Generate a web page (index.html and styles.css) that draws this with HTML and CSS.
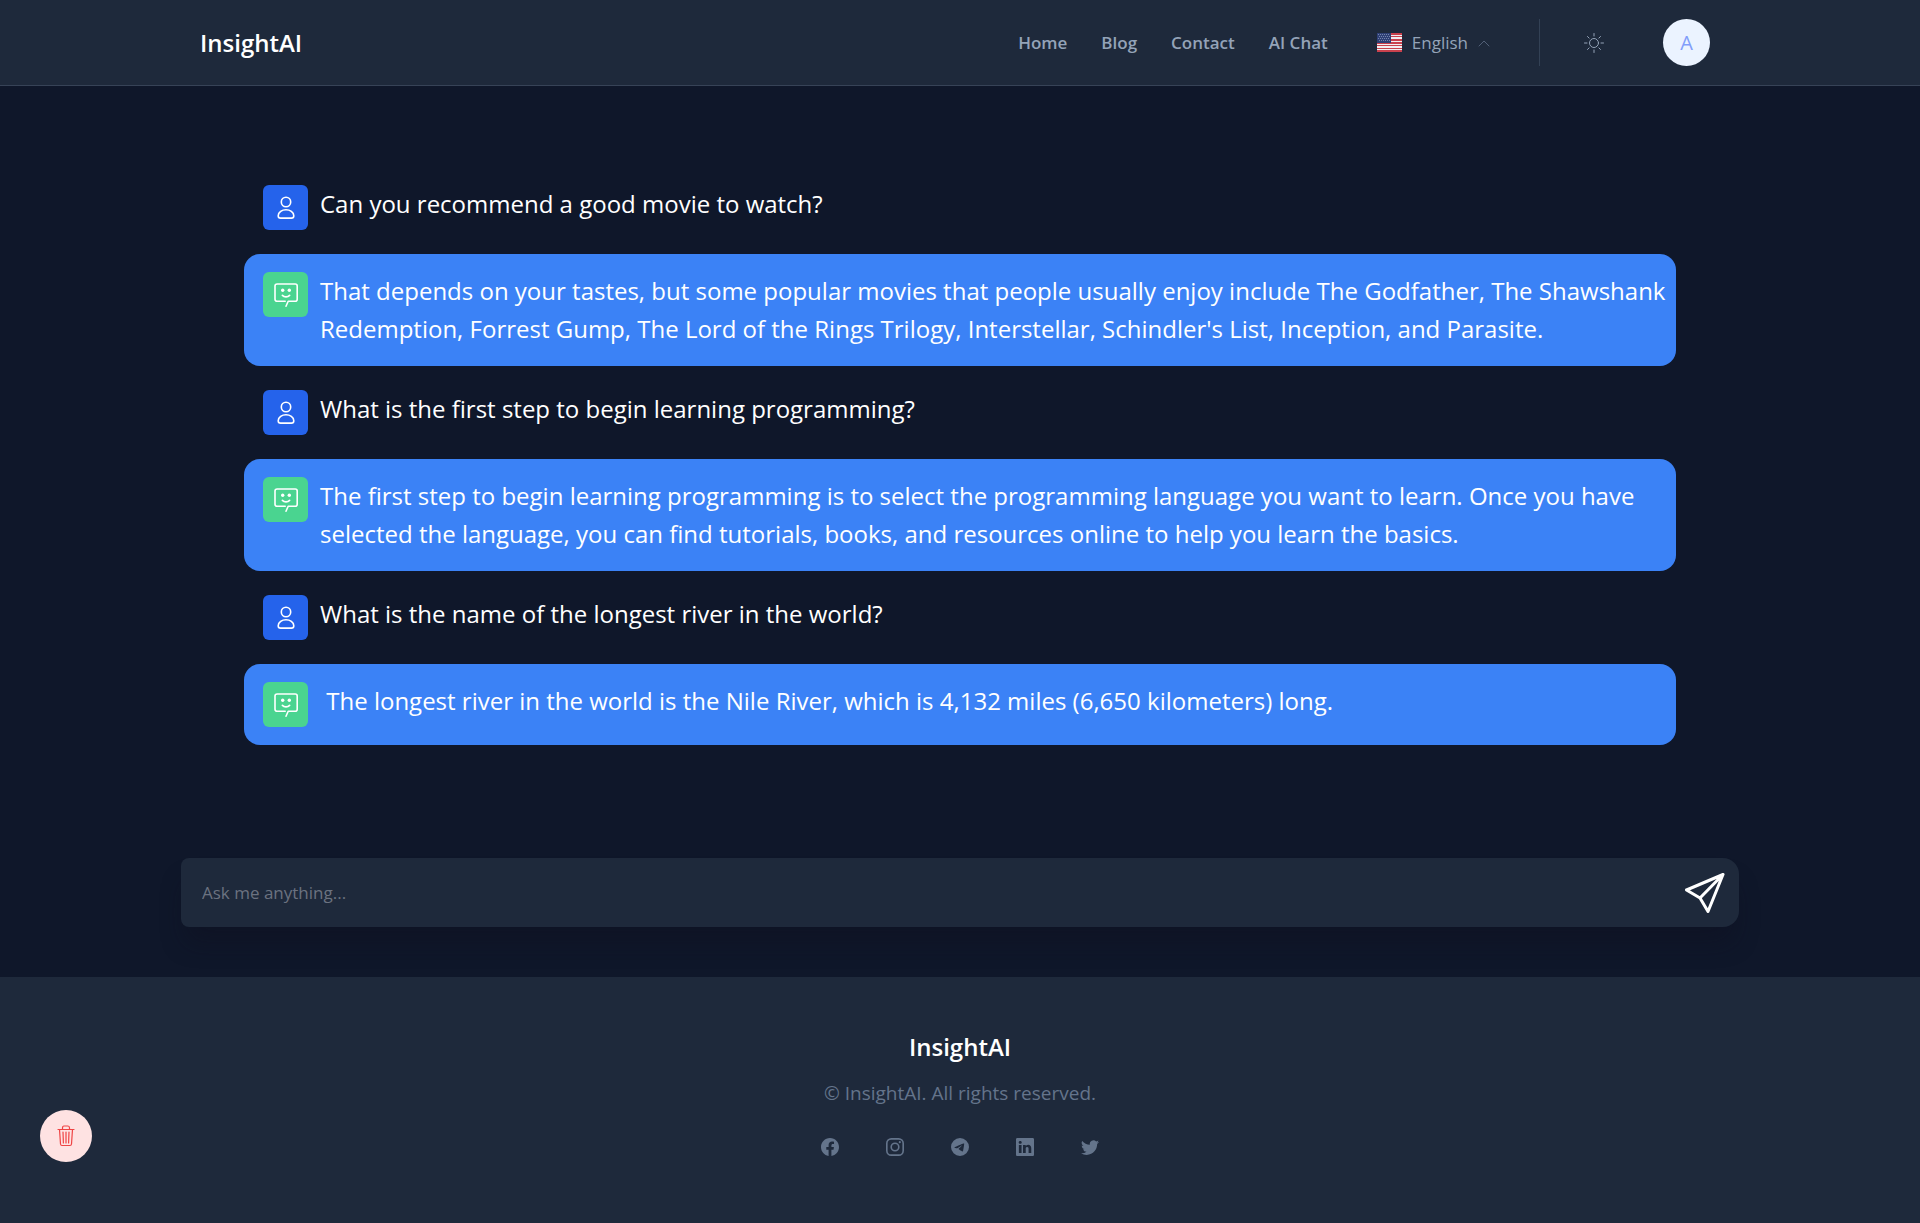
FILE: index.html
```html
<!DOCTYPE html>
<html lang="en">
<head>
<meta charset="utf-8">
<title>InsightAI</title>
<link rel="stylesheet" href="styles.css">
</head>
<body>
<header class="header">
  <div class="header-inner">
    <a class="brand" href="#">InsightAI</a>
    <nav class="nav">
      <a href="#">Home</a>
      <a href="#">Blog</a>
      <a href="#">Contact</a>
      <a href="#">AI Chat</a>
    </nav>
    <button class="language" type="button">
      <svg class="flag" viewBox="0 0 25 19" aria-hidden="true">
        <rect width="25" height="19" fill="#c9414d"/>
        <path fill="#f1eef2" d="M0 2h25v1H0zM0 4h25v2H0zM0 8h25v1H0zM0 11h25v1H0zM0 13h25v2H0zM0 16h25v1H0z"/>
        <rect width="14" height="10" fill="#2f4075"/>
        <path stroke="#7484ac" stroke-linecap="butt" stroke-dasharray="1 1" d="M1 1.500h12M2 3.500h12M1 5.500h12M2 7.500h12"/>
      </svg>
      <span>English</span>
      <svg class="chevron" viewBox="0 0 12 8" aria-hidden="true"><path d="M1 7l5-5 5 5"/></svg>
    </button>
    <span class="divider"></span>
    <button class="theme" type="button" aria-label="Toggle theme">
      <svg viewBox="0 0 20 20" aria-hidden="true"><circle cx="10" cy="10" r="4.500"/><path d="M10 .5v2.500M10 17v2.500M.5 10H3M17 10h2.500M3.500 3.500l1.600 1.600M14.900 14.900l1.600 1.600M3.500 16.500l1.600-1.600M14.900 5.100l1.600-1.600"/></svg>
    </button>
    <button class="avatar" type="button">A</button>
  </div>
</header>

<main class="main">
  <section class="chat">
    <article class="message">
      <span class="badge badge-user"><svg viewBox="0 0 24 24"><circle cx="12" cy="6" r="4.700"/><path d="M12 13.800c3.900 0 7.800 2.400 7.800 5.900 0 1.700-1.100 2.400-2.400 2.400H6.600c-1.300 0-2.400-.7-2.400-2.400 0-3.500 3.900-5.900 7.800-5.900z"/></svg></span>
      <p>Can you recommend a good movie to watch?</p>
    </article>
    <article class="message reply">
      <span class="badge badge-bot"><svg viewBox="0 0 24 24"><path d="M12 23.200l2.200-5h7c1.200 0 2-.8 2-2V3c0-1.200-.8-2-2-2h-18C2 1 1 1.800 1 3v13.200c0 1.200 1 2 2.200 2h8M8.400 12.400c1.800 2 5.400 2 7.200 0"/><circle class="eye" cx="8.700" cy="7.300" r="1.700"/><circle class="eye" cx="15.300" cy="7.300" r="1.700"/></svg></span>
      <p>That depends on your tastes, but some popular movies that people usually enjoy include The Godfather, The Shawshank Redemption, Forrest Gump, The Lord of the Rings Trilogy, Interstellar, Schindler's List, Inception, and Parasite.</p>
    </article>
    <article class="message">
      <span class="badge badge-user"><svg viewBox="0 0 24 24"><circle cx="12" cy="6" r="4.700"/><path d="M12 13.800c3.900 0 7.800 2.400 7.800 5.900 0 1.700-1.100 2.400-2.400 2.400H6.600c-1.300 0-2.400-.7-2.400-2.400 0-3.500 3.900-5.900 7.800-5.900z"/></svg></span>
      <p>What is the first step to begin learning programming?</p>
    </article>
    <article class="message reply">
      <span class="badge badge-bot"><svg viewBox="0 0 24 24"><path d="M12 23.200l2.200-5h7c1.200 0 2-.8 2-2V3c0-1.200-.8-2-2-2h-18C2 1 1 1.800 1 3v13.200c0 1.200 1 2 2.200 2h8M8.400 12.400c1.800 2 5.400 2 7.200 0"/><circle class="eye" cx="8.700" cy="7.300" r="1.700"/><circle class="eye" cx="15.300" cy="7.300" r="1.700"/></svg></span>
      <p>The first step to begin learning programming is to select the programming language you want to learn. Once you have selected the language, you can find tutorials, books, and resources online to help you learn the basics.</p>
    </article>
    <article class="message">
      <span class="badge badge-user"><svg viewBox="0 0 24 24"><circle cx="12" cy="6" r="4.700"/><path d="M12 13.800c3.900 0 7.800 2.400 7.800 5.900 0 1.700-1.100 2.400-2.400 2.400H6.600c-1.300 0-2.400-.7-2.400-2.400 0-3.500 3.900-5.900 7.800-5.900z"/></svg></span>
      <p>What is the name of the longest river in the world?</p>
    </article>
    <article class="message reply">
      <span class="badge badge-bot"><svg viewBox="0 0 24 24"><path d="M12 23.200l2.200-5h7c1.200 0 2-.8 2-2V3c0-1.200-.8-2-2-2h-18C2 1 1 1.800 1 3v13.200c0 1.200 1 2 2.200 2h8M8.400 12.400c1.800 2 5.400 2 7.200 0"/><circle class="eye" cx="8.700" cy="7.300" r="1.700"/><circle class="eye" cx="15.300" cy="7.300" r="1.700"/></svg></span>
      <p>&nbsp;The longest river in the world is the Nile River, which is 4,132 miles (6,650 kilometers) long.</p>
    </article>
  </section>
  <form class="ask">
    <input type="text" aria-label="Ask me anything" placeholder="Ask me anything...">
    <button type="submit" aria-label="Send">
      <svg viewBox="0 0 40 40" aria-hidden="true"><path d="M38 1.500L1.500 17l13.500 8L23 38.500z M38 1.500L15 25"/></svg>
    </button>
  </form>
</main>

<footer class="footer">
  <a class="brand" href="#">InsightAI</a>
  <p class="copyright">© InsightAI. All rights reserved.</p>
  <div class="social">
    <a href="#" aria-label="Facebook"><svg viewBox="0 0 16 16"><path d="M16 8.049c0-4.446-3.582-8.050-8-8.050C3.580 0-.002 3.603-.002 8.050c0 4.017 2.926 7.347 6.750 7.951v-5.625h-2.030V8.050H6.750V6.275c0-2.017 1.195-3.131 3.022-3.131.876 0 1.791.157 1.791.157v1.980h-1.009c-.993 0-1.303.621-1.303 1.258v1.510h2.218l-.354 2.326H9.250V16c3.824-.604 6.750-3.934 6.750-7.951z"/></svg></a>
    <a href="#" aria-label="Instagram"><svg viewBox="0 0 16 16"><path fill-rule="evenodd" d="M4.700 0h6.600A4.700 4.700 0 0 1 16 4.700v6.600a4.700 4.700 0 0 1-4.700 4.700H4.700A4.700 4.700 0 0 1 0 11.300V4.700A4.700 4.700 0 0 1 4.700 0zm0 1.450A3.250 3.250 0 0 0 1.450 4.700v6.600a3.250 3.250 0 0 0 3.250 3.250h6.600a3.250 3.250 0 0 0 3.250-3.250V4.700a3.250 3.250 0 0 0-3.250-3.250zM8 3.900a4.100 4.100 0 1 1 0 8.200 4.100 4.100 0 0 1 0-8.200zm0 1.440a2.660 2.660 0 1 0 0 5.320 2.660 2.660 0 0 0 0-5.320z"/><circle cx="12.270" cy="3.730" r=".96"/></svg></a>
    <a href="#" aria-label="Telegram"><svg viewBox="0 0 16 16"><path d="M16 8A8 8 0 1 1 0 8a8 8 0 0 1 16 0zM8.287 5.906c-.778.324-2.334.994-4.666 2.010-.378.150-.577.298-.595.442-.030.243.275.339.690.470l.175.055c.408.133.958.288 1.243.294.260.006.549-.100.868-.320 2.179-1.471 3.304-2.214 3.374-2.230.050-.012.120-.026.166.016.047.041.042.120.037.141-.030.129-1.227 1.241-1.846 1.817-.193.180-.330.307-.358.336a8.154 8.154 0 0 1-.188.186c-.380.366-.664.640.015 1.088.327.216.589.393.850.571.284.194.568.387.936.629.093.060.183.125.270.187.331.236.630.448.997.414.214-.020.435-.220.547-.820.265-1.417.786-4.486.906-5.751a1.426 1.426 0 0 0-.013-.315.337.337 0 0 0-.114-.217.526.526 0 0 0-.310-.093c-.300.005-.763.166-2.984 1.090z"/></svg></a>
    <a href="#" aria-label="LinkedIn"><svg viewBox="0 0 16 16"><path d="M0 1.146C0 .513.526 0 1.175 0h13.650C15.474 0 16 .513 16 1.146v13.708c0 .633-.526 1.146-1.175 1.146H1.175C.526 16 0 15.487 0 14.854V1.146zm4.943 12.248V6.169H2.542v7.225h2.401zm-1.200-8.212c.837 0 1.358-.554 1.358-1.248-.015-.709-.520-1.248-1.342-1.248-.822 0-1.359.540-1.359 1.248 0 .694.521 1.248 1.327 1.248h.016zm4.908 8.212V9.359c0-.216.016-.432.080-.586.173-.431.568-.878 1.232-.878.869 0 1.216.662 1.216 1.634v3.865h2.401V9.250c0-2.220-1.184-3.252-2.764-3.252-1.274 0-1.845.700-2.165 1.193v.025h-.016a5.540 5.540 0 0 1 .016-.025V6.169h-2.400c.030.678 0 7.225 0 7.225h2.400z"/></svg></a>
    <a href="#" aria-label="Twitter"><svg viewBox="0 0 16 16"><path d="M5.026 15c6.038 0 9.341-5.003 9.341-9.334 0-.140 0-.282-.006-.422A6.685 6.685 0 0 0 16 3.542a6.658 6.658 0 0 1-1.889.518 3.301 3.301 0 0 0 1.447-1.817 6.533 6.533 0 0 1-2.087.793A3.286 3.286 0 0 0 7.875 6.030a9.325 9.325 0 0 1-6.767-3.429 3.289 3.289 0 0 0 1.018 4.382A3.323 3.323 0 0 1 .640 6.575v.045a3.288 3.288 0 0 0 2.632 3.218 3.203 3.203 0 0 1-.865.115 3.230 3.230 0 0 1-.614-.057 3.283 3.283 0 0 0 3.067 2.277A6.588 6.588 0 0 1 .780 13.580a6.320 6.320 0 0 1-.780-.045A9.344 9.344 0 0 0 5.026 15z"/></svg></a>
  </div>
</footer>

<button class="clear" type="button" aria-label="Clear chat">
  <svg viewBox="0 0 18 22" aria-hidden="true"><path d="M1 4.500h16M5.500 4.500V3c0-1 .5-2 1.500-2h4c1 0 1.500 1 1.500 2v1.500M2.500 4.500l1 14.500c.1 1 .8 1.500 1.500 1.500h8c.8 0 1.400-.5 1.500-1.500l1-14.500M9 7v11M6 7l.4 11M12 7l-.4 11"/></svg>
</button>
</body>
</html>
```
FILE: styles.css
```css
* { box-sizing: border-box; }
body {
  margin: 0;
  background: #0f172a;
  color: #fff;
  font: 17px/26px "Segoe UI", "Open Sans", "Noto Sans", sans-serif;
}
a { color: inherit; text-decoration: none; }
p { margin: 0; }
button, input { font: inherit; color: inherit; border: 0; padding: 0; background: none; }
svg { display: block; fill: none; stroke: currentColor; stroke-linecap: round; stroke-linejoin: round; }

.header { background: #1e293b; border-bottom: 1px solid #374357; }
.header-inner {
  display: flex;
  align-items: center;
  max-width: 1560px;
  height: 85px;
  margin: 0 auto;
  padding: 0 30px 0 20px;
}
.brand { font-size: 24px; line-height: 32px; font-weight: 600; }
.nav { display: flex; gap: 34px; margin-left: auto; color: #94a3b8; font-weight: 600; }
.language { display: flex; align-items: center; margin-left: 49px; color: #94a3b8; }
.flag { width: 25px; height: 19px; margin-right: 10px; stroke: none; }
.chevron { width: 12px; height: 8px; margin-left: 10px; color: #526077; }
.divider { width: 1px; height: 47px; margin-left: 49px; background: #334155; }
.theme { margin-left: 44px; color: #94a3b8; }
.theme svg { width: 20px; height: 20px; stroke-width: 1; }
.avatar { width: 47px; height: 47px; margin-left: 59px; border-radius: 50%; background: #ebf3ff; color: #819dfa; font-size: 20px; }

.main { max-width: 1558px; margin: 0 auto; padding: 75px 0 50px; }
.chat { max-width: 1432px; margin: 0 auto; padding-bottom: 113px; }
.message { display: flex; align-items: flex-start; gap: 12px; padding: 24px 10px 24px 19px; font-size: 24px; line-height: 38px; }
.reply { padding-block: 18px; border-radius: 16px; background: #3b82f6; }
.badge { display: grid; flex: none; place-items: center; width: 45px; height: 45px; border-radius: 6px; }
.badge svg { width: 24px; height: 24px; stroke-width: 1.600; }
.badge-user { background: #2563eb; }
.badge-bot { background: #4ad490; }
.badge .eye { fill: currentColor; stroke: none; }

.ask {
  display: flex;
  align-items: center;
  height: 69px;
  padding-right: 14px;
  border-radius: 8px 16px 16px 8px;
  background: #1e293b;
  box-shadow: 0 20px 25px -5px rgba(15, 15, 30, .4);
}
.ask input { flex: 1; height: 100%; padding: 0 21px; outline: 0; }
.ask input::placeholder { color: #6b7280; }
.ask svg { width: 40px; height: 40px; stroke-width: 3; }

.footer { display: flex; flex-direction: column; align-items: center; padding: 54px 0 67px; background: #1e293b; }
.copyright { margin-top: 16px; color: #64748b; font-size: 19px; line-height: 28px; }
.social { display: flex; gap: 47px; margin-top: 31px; color: #64748b; }
.social svg { width: 18px; height: 18px; fill: currentColor; stroke: none; }

.clear {
  position: fixed;
  left: 40px;
  bottom: 61px;
  display: grid;
  place-items: center;
  width: 52px;
  height: 52px;
  border-radius: 50%;
  background: #fee2e2;
  color: #ef4444;
}
.clear svg { width: 18px; height: 22px; stroke-width: 1.200; }
```
